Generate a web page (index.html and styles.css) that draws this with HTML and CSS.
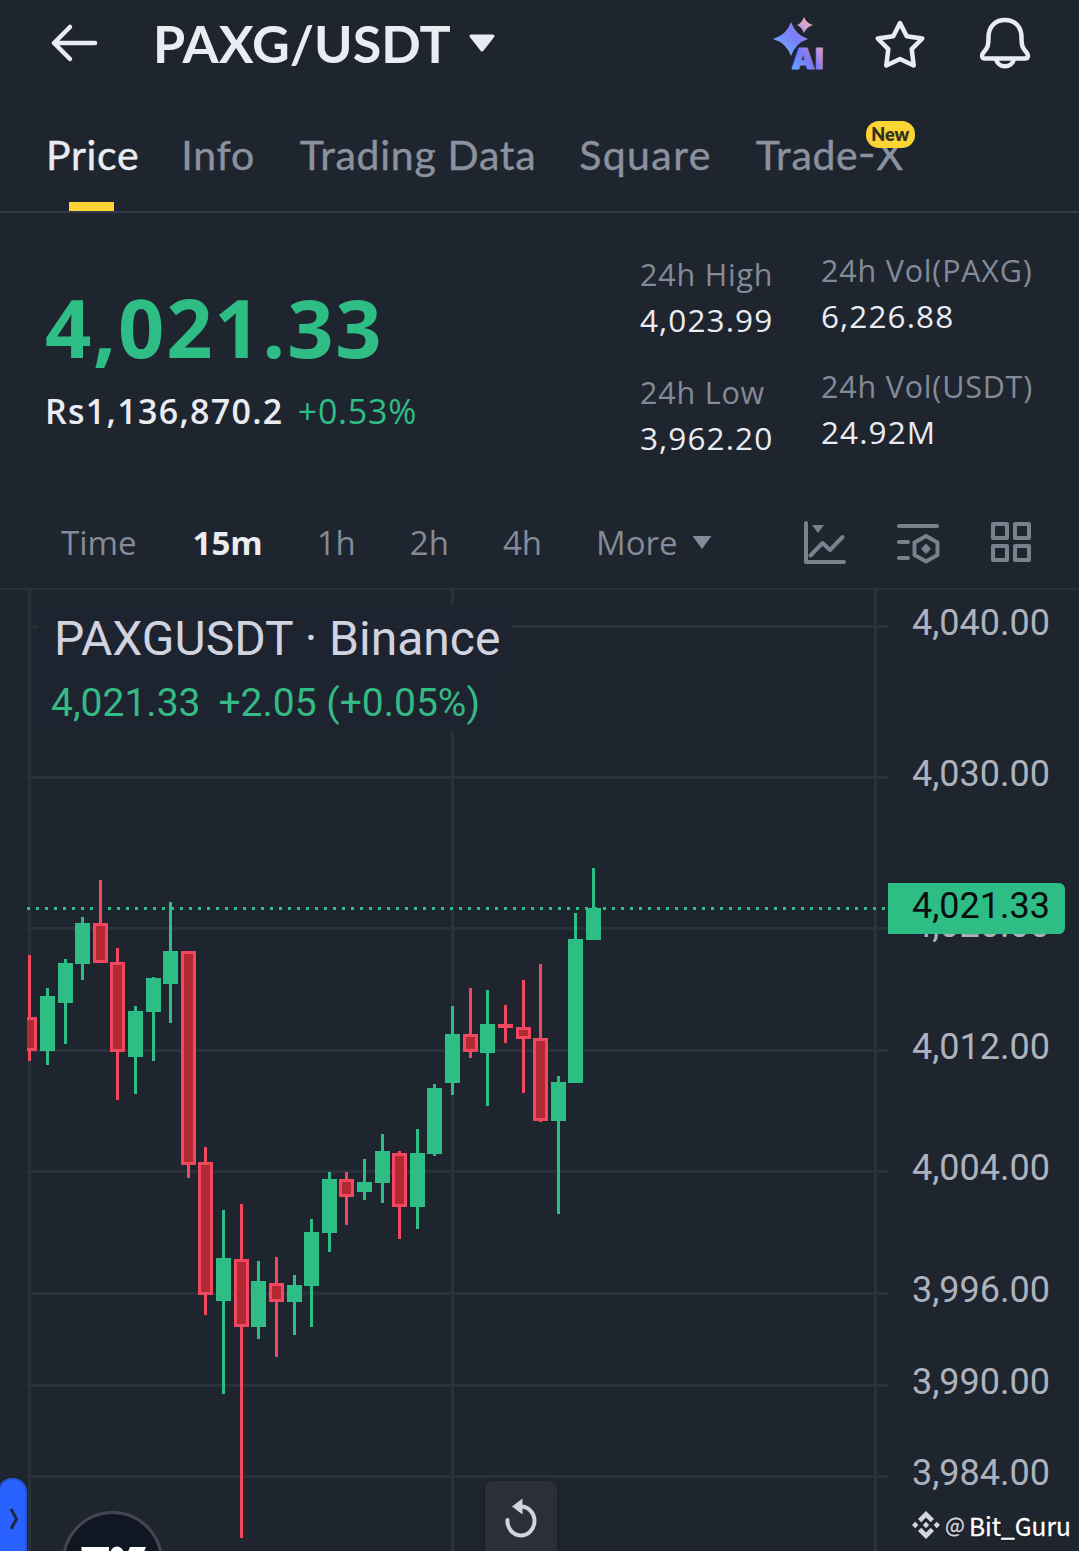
FILE: index.html
```html
<!DOCTYPE html>
<html lang="en">
<head>
    <meta charset="UTF-8" />
    <meta name="viewport" content="width=device-width, initial-scale=1.0" />
    <title>PAXG/USDT</title>
    <link rel="stylesheet" href="styles.css">
</head>
<body>
    <!-- Header -->
    <header class="header">
        <svg class="back" width="48" height="40" viewBox="0 0 48 40">
            <path d="M20 4 L4 20 L20 36 M4 20 H45" />
        </svg>
        <h1 class="pair">PAXG/USDT</h1>
        <svg class="pair-caret" width="28" height="20" viewBox="0 0 28 20">
            <path d="M3 2 H25 L14 16 Z" />
        </svg>
        <div class="header-icons">
            <svg width="56" height="60" viewBox="0 -2 56 60">
                <defs>
                    <linearGradient id="spark" x1="0" y1="1" x2="1" y2="0">
                        <stop offset="0" stop-color="#6fb8ff" />
                        <stop offset="0.6" stop-color="#7c7df8" />
                        <stop offset="1" stop-color="#a88cf5" />
                    </linearGradient>
                    <linearGradient id="spark-small" x1="0" y1="1" x2="1" y2="0">
                        <stop offset="0" stop-color="#a58bff" />
                        <stop offset="1" stop-color="#ffc09a" />
                    </linearGradient>
                    <linearGradient id="ai" x1="0" y1="1" x2="1" y2="0">
                        <stop offset="0" stop-color="#62b0ff" />
                        <stop offset="0.5" stop-color="#7b78f8" />
                        <stop offset="1" stop-color="#f0a5c8" />
                    </linearGradient>
                </defs>
                <path fill="url(#spark)" d="M20 6 Q24.500 19 37 23 Q24.500 27 20 40 Q15.500 27 2 23 Q15.500 19 20 6 Z" />
                <path fill="url(#spark-small)" d="M33 1 Q35.500 7.500 42 9 Q35.500 11 33 17 Q30.500 11 26 9 Q30.500 7.500 33 1 Z" />
                <text class="ai-text" x="20.500" y="53" textLength="32" lengthAdjust="spacingAndGlyphs">AI</text>
            </svg>
            <svg class="line-icon star" width="52" height="52" viewBox="0 0 52 52">
                <path d="M26 5 L32.700 18.300 L48.300 20.500 L37.700 31.200 L39.700 47.500 L26 41 L12.300 47.500 L14.300 31.200 L3.700 20.500 L19.300 18.300 Z" />
            </svg>
            <svg class="line-icon" width="52" height="56" viewBox="0 0 52 56">
                <path d="M26 4 C16 4 9.500 11 9.500 21 C9.500 30 8.500 32 4.500 36.500 C2 39.500 3 42.500 6 42.500 H46 C49 42.500 50 39.500 47.500 36.500 C43.500 32 42.500 30 42.500 21 C42.500 11 36 4 26 4 Z" />
                <path d="M17 43 A9.200 9.200 0 0 0 35 43" />
            </svg>
        </div>
    </header>

    <!-- Tabs -->
    <nav class="tabs">
        <a class="tab active">Price</a>
        <a class="tab">Info</a>
        <a class="tab tab-data">Trading Data</a>
        <a class="tab tab-square">Square</a>
        <a class="tab tab-trade">Trade<span class="dash">-</span>X<span class="badge">New</span></a>
    </nav>

    <!-- Ticker -->
    <section class="ticker">
        <div class="ticker-main">
            <div class="price">4,021.33</div>
            <div class="fiat">Rs1,136,870.2 <span class="change">+0.53%</span></div>
        </div>
        <div class="stats">
            <div class="stat">
                <span class="stat-label">24h High</span>
                <span class="stat-value">4,023.99</span>
            </div>
            <div class="stat">
                <span class="stat-label">24h Low</span>
                <span class="stat-value">3,962.20</span>
            </div>
        </div>
        <div class="stats stats-vol">
            <div class="stat">
                <span class="stat-label">24h Vol(PAXG)</span>
                <span class="stat-value">6,226.88</span>
            </div>
            <div class="stat">
                <span class="stat-label">24h Vol(USDT)</span>
                <span class="stat-value">24.92M</span>
            </div>
        </div>
    </section>

    <!-- Interval toolbar -->
    <div class="toolbar">
        <div class="intervals">
            <span class="interval">Time</span>
            <span class="interval active">15m</span>
            <span class="interval">1h</span>
            <span class="interval">2h</span>
            <span class="interval">4h</span>
            <span class="interval more">More
                <svg width="22" height="16" viewBox="0 0 22 16"><path d="M1.500 1 H20.500 L11 14 Z" /></svg>
            </span>
        </div>
        <div class="tools">
            <svg width="44" height="44" viewBox="0 0 44 44">
                <path d="M4 2 V41 H42 M8.500 34.500 L20.500 22 L28 29 L40.500 16" />
                <path class="solid" d="M10 4 H22 L16 12 Z" />
            </svg>
            <svg width="44" height="44" viewBox="0 0 44 44">
                <path d="M3 5 H41 M3 21 H12 M3 37 H12 M30 15 L41.500 21.500 V34 L30 40.500 L18.500 34 V21.500 Z" />
                <path class="solid" d="M30 22.500 L35 27.700 L30 33 L25 27.700 Z" />
            </svg>
            <svg width="44" height="44" viewBox="0 0 44 44">
                <rect x="4" y="3" width="14" height="14" />
                <rect x="26" y="3" width="14" height="14" />
                <rect x="4" y="25" width="14" height="14" />
                <rect x="26" y="25" width="14" height="14" />
            </svg>
        </div>
    </div>

    <!-- Chart -->
    <main class="chart">
        <svg id="plot" width="1079" height="961" viewBox="0 590 1079 961"></svg>

        <div class="legend">
            <div class="legend-title">PAXGUSDT · Binance</div>
            <div class="legend-values"><span>4,021.33</span><span>+2.05 (+0.05%)</span></div>
        </div>

        <div class="price-tag">4,021.33</div>

        <div class="drawer-handle">
            <svg width="12" height="24" viewBox="0 0 12 24"><path d="M3 2 L8.500 12 L3 22" /></svg>
        </div>

        <div class="tv-logo">
            <svg width="100" height="60" viewBox="0 0 100 60">
                <path d="M18.500 36 H46 V60 H32 V48 H18.500 Z" />
                <circle cx="54" cy="42" r="6.500" />
                <path d="M67 36 H83 L73 60 H57 Z" />
            </svg>
        </div>

        <div class="reset">
            <svg width="40" height="44" viewBox="0 0 40 44">
                <path class="ring" d="M6.500 24 A13.500 14.500 0 1 0 20 10.500" />
                <path class="head" d="M11 10.500 L21.500 2.500 V18.500 Z" />
            </svg>
        </div>

        <div class="watermark">
            <svg width="28" height="28" viewBox="0 0 28 28">
                <path d="M14 0 L22 8 L18.700 11.300 L14 6.600 L9.300 11.300 L6 8 Z" />
                <path d="M14 28 L22 20 L18.700 16.700 L14 21.400 L9.300 16.700 L6 20 Z" />
                <path d="M14 10.800 L17.200 14 L14 17.200 L10.800 14 Z" />
                <path d="M3.200 10.800 L6.400 14 L3.200 17.200 L0 14 Z" />
                <path d="M24.800 10.800 L28 14 L24.800 17.200 L21.600 14 Z" />
            </svg>
            <span class="at">@</span><span class="user">Bit_Guru</span>
        </div>
    </main>

    <script src="chart.js"></script>
</body>
</html>
```

FILE: styles.css
```css
* {
    box-sizing: border-box;
}

body {
    margin: 0;
    width: 1079px;
    height: 1551px;
    overflow: hidden;
    background: #1f252f;
    color: #eaecf2;
    font-family: 'Lato', 'Open Sans', sans-serif;
}

svg {
    display: block;
    flex-shrink: 0;
}

/* Header */
.header {
    display: flex;
    align-items: center;
    height: 88px;
    padding: 0 48px 0 50px;
}

.back {
    fill: none;
    stroke: #eaecf2;
    stroke-width: 4.5;
    stroke-linecap: round;
    stroke-linejoin: round;
    margin-bottom: 2px;
}

.pair {
    margin: 0 0 3px 55px;
    font-size: 52px;
    line-height: 60px;
    font-weight: 700;
}

.pair-caret {
    margin-left: 17px;
    fill: #eaecf2;
    stroke: #eaecf2;
    stroke-width: 3;
    stroke-linejoin: round;
}

.header-icons {
    display: flex;
    align-items: center;
    gap: 47px;
    margin-left: auto;
}

.header-icons svg {
    overflow: visible;
}

.ai-text {
    font-family: 'Inter', sans-serif;
    font-size: 29px;
    font-weight: 900;
    fill: url(#ai);
    stroke: url(#ai);
    stroke-width: 1;
    stroke-linejoin: round;
}

.line-icon {
    fill: none;
    stroke: #eaecf2;
    stroke-width: 4.5;
    stroke-linejoin: round;
}

.star {
    margin: 0 6px 1px 0;
}

/* Tabs */
.tabs {
    display: flex;
    gap: 42px;
    height: 125px;
    padding: 37px 0 0 46px;
    border-bottom: 2px solid #333a45;
}

.tab {
    position: relative;
    display: block;
    font-size: 41px;
    line-height: 60px;
    color: #8b919f;
    letter-spacing: 0.7px;
    -webkit-text-stroke: 0.4px;
}

.tab.active {
    color: #eaecf2;
}

.tab.active::after {
    content: "";
    display: block;
    width: 45px;
    height: 9px;
    margin: 17px 0 0 23px;
    background: #fcd535;
}

.tab-data {
    margin-left: 3px;
}

.tab-square {
    margin-left: 1px;
    letter-spacing: 1.4px;
}

.tab-trade {
    margin-left: 2px;
}

.dash {
    display: inline-block;
    margin: 0 1px;
    transform: translateY(-2px) scaleX(1.2);
}

.badge {
    position: absolute;
    left: 110px;
    top: -4px;
    width: 49px;
    height: 27px;
    border-radius: 13px;
    background: #fcd535;
    color: #33301f;
    font-size: 18px;
    line-height: 27px;
    font-weight: 800;
    letter-spacing: 0;
    text-align: center;
    -webkit-text-stroke: 0;
}

/* Ticker */
.ticker {
    display: flex;
    height: 285px;
    font-family: 'Open Sans', sans-serif;
}

.ticker-main {
    width: 640px;
    padding: 69px 0 0 45px;
}

.price {
    font-size: 81px;
    line-height: 90px;
    font-weight: 700;
    letter-spacing: 1.8px;
    color: #2ebd85;
}

.fiat {
    margin-top: 19px;
    font-size: 34px;
    line-height: 40px;
    font-weight: 600;
    letter-spacing: 1.3px;
    white-space: nowrap;
}

.change {
    margin-left: 4px;
    font-weight: 500;
    letter-spacing: 0.8px;
    color: #2ebd85;
}

.stats {
    display: flex;
    flex-direction: column;
    gap: 25px;
    width: 181px;
    padding-top: 38px;
}

.stats-vol {
    width: 230px;
    padding-top: 33.5px;
    gap: 24px;
}

.stat {
    display: flex;
    flex-direction: column;
    white-space: nowrap;
    line-height: 46.5px;
}

.stat-label {
    font-size: 30.5px;
    letter-spacing: 0.8px;
    color: #848a97;
}

.stat-value {
    font-size: 31.5px;
    letter-spacing: 1.1px;
    margin-top: -0.5px;
}

/* Interval toolbar */
.toolbar {
    display: flex;
    justify-content: space-between;
    align-items: center;
    height: 92px;
    padding: 0 46px 0 61px;
    border-bottom: 2px solid #2a303a;
}

.intervals {
    display: flex;
    gap: 54px;
    margin-bottom: 1px;
    font-family: 'Open Sans', sans-serif;
    font-size: 33px;
    line-height: 46px;
    color: #848a97;
}

.interval.active {
    margin-left: 2px;
    color: #eaecf2;
    font-weight: 700;
}

.more {
    display: flex;
    align-items: center;
    gap: 13px;
}

.more svg {
    fill: #848a97;
}

.tools {
    display: flex;
    gap: 49.5px;
    fill: none;
    stroke: #7a808c;
    stroke-width: 4;
    stroke-linecap: round;
    stroke-linejoin: round;
}

.tools .solid {
    fill: #7a808c;
    stroke: none;
}

/* Chart */
.chart {
    position: relative;
    height: 961px;
    font-family: 'Roboto', sans-serif;
}

.grid {
    stroke: #2b313b;
    stroke-width: 3;
}

.axis-label {
    font-size: 36px;
    fill: #aeb2bd;
}

.price-line {
    stroke: #2ebd85;
    stroke-width: 3;
    stroke-dasharray: 3 6;
}

.up {
    fill: #2ebd85;
}

.down {
    fill: #f0485f;
}

.down-core {
    fill: #b22833;
}

.legend {
    position: absolute;
    left: 38px;
    top: 14px;
}

.legend div {
    width: max-content;
    background: rgba(31, 37, 47, 0.85);
    white-space: nowrap;
}

.legend-title {
    padding: 0 12px 0 16px;
    font-size: 48px;
    line-height: 70px;
    color: #d1d4e0;
}

.legend-values {
    display: flex;
    gap: 18px;
    padding: 0 10px 0 13px;
    font-size: 39px;
    line-height: 58px;
    color: #35b985;
}

.price-tag {
    position: absolute;
    left: 888px;
    top: 293px;
    width: 177px;
    height: 51px;
    padding-left: 24px;
    border-radius: 0 6px 6px 0;
    background: #2ebd85;
    color: #0b0e11;
    font-size: 36px;
    line-height: 47px;
}

.drawer-handle {
    position: absolute;
    left: -2px;
    top: 888px;
    width: 29px;
    height: 90px;
    padding: 27px 0 0 8px;
    border: 2px solid #2455d8;
    border-radius: 14px;
    background: #2962ff;
}

.drawer-handle svg {
    fill: none;
    stroke: #1b2848;
    stroke-width: 3;
}

.tv-logo {
    position: absolute;
    left: 62px;
    top: 921px;
    width: 101px;
    height: 101px;
    border: 3px solid #434751;
    border-radius: 50%;
    background: #111722;
    overflow: hidden;
}

.tv-logo svg {
    margin-left: -2px;
    margin-top: -3px;
    fill: #fff;
}

.reset {
    position: absolute;
    left: 485px;
    top: 891px;
    width: 72px;
    height: 80px;
    padding: 15px 0 0 16px;
    border-radius: 8px;
    background: #2a2f39;
    box-shadow: 0 2px 5px rgba(0, 0, 0, 0.25);
}

.reset .ring {
    fill: none;
    stroke: #d1d4dc;
    stroke-width: 4;
    stroke-linecap: round;
}

.reset .head {
    fill: #d1d4dc;
}

.watermark {
    position: absolute;
    left: 912px;
    top: 915px;
    display: flex;
    align-items: center;
    height: 40px;
    font-family: 'Noto Sans CJK SC', 'Noto Sans', sans-serif;
    font-size: 24.5px;
    color: #fff;
    -webkit-text-stroke: 0.3px;
    text-shadow: 0 1px 2px rgba(0, 0, 0, 0.5);
}

.watermark svg {
    fill: #d3d6df;
}

.at {
    margin: 0 0 3px 5px;
    font-size: 21px;
    color: #d3d6df;
}

.user {
    margin-left: 4px;
}
```

FILE: chart.js
```js
const NS = "http://www.w3.org/2000/svg";
const plot = document.getElementById("plot");

const levels = [
    { y: 626.5, label: "4,040.00" },
    { y: 777.5, label: "4,030.00" },
    { y: 928.5, label: "4,020.00" },
    { y: 1050.5, label: "4,012.00" },
    { y: 1171.5, label: "4,004.00" },
    { y: 1293.5, label: "3,996.00" },
    { y: 1385.5, label: "3,990.00" },
    { y: 1476.5, label: "3,984.00" }
];

// x, high, body top, body bottom, low, direction
const candles = [
    [29, 955, 1017, 1051, 1061, "down"],
    [47, 988, 996, 1051, 1065, "up"],
    [65, 959, 963, 1003, 1044, "up"],
    [82, 917, 923, 964, 980, "up"],
    [100, 880, 923, 963, 963, "down"],
    [117, 948, 962, 1052, 1100, "down"],
    [135, 1006, 1011, 1057, 1094, "up"],
    [153, 977, 978, 1012, 1061, "up"],
    [170, 902, 951, 984, 1023, "up"],
    [188, 951, 951, 1165, 1178, "down"],
    [205, 1147, 1162, 1295, 1315, "down"],
    [223, 1210, 1258, 1301, 1394, "up"],
    [241, 1204, 1259, 1327, 1538, "down"],
    [258, 1261, 1281, 1327, 1339, "up"],
    [276, 1257, 1283, 1302, 1357, "down"],
    [294, 1275, 1285, 1302, 1335, "up"],
    [311, 1219, 1232, 1286, 1327, "up"],
    [329, 1172, 1179, 1233, 1252, "up"],
    [346, 1172, 1179, 1197, 1225, "down"],
    [364, 1159, 1182, 1192, 1200, "up"],
    [382, 1134, 1151, 1183, 1203, "up"],
    [399, 1151, 1153, 1207, 1239, "down"],
    [417, 1129, 1153, 1207, 1229, "up"],
    [434, 1084, 1088, 1154, 1156, "up"],
    [452, 1006, 1034, 1083, 1095, "up"],
    [470, 988, 1034, 1052, 1058, "down"],
    [487, 990, 1024, 1053, 1106, "up"],
    [505, 1005, 1024, 1028, 1043, "down"],
    [523, 980, 1027, 1039, 1093, "down"],
    [540, 964, 1038, 1121, 1122, "down"],
    [558, 1076, 1082, 1121, 1214, "up"],
    [575, 913, 939, 1083, 1083, "up"],
    [593, 868, 908, 940, 940, "up"]
];

function add(name, attrs, text) {
    const el = document.createElementNS(NS, name);
    for (const key in attrs) el.setAttribute(key, attrs[key]);
    if (text) el.textContent = text;
    plot.appendChild(el);
}

function rect(x, y, x2, y2, cls) {
    const left = Math.max(x, 27);
    add("rect", { x: left, y: y, width: x2 - left, height: y2 - y, class: cls });
}

[29.5, 452.5, 875.5].forEach(x => add("line", { x1: x, x2: x, y1: 588, y2: 1551, class: "grid" }));

levels.forEach(level => {
    add("line", { x1: 27, x2: 888, y1: level.y, y2: level.y, class: "grid" });
    add("text", { x: 912, y: level.y + 8.5, class: "axis-label" }, level.label);
});

add("line", { x1: 27, x2: 888, y1: 908.5, y2: 908.5, class: "price-line" });

candles.forEach(([x, high, top, bottom, low, dir]) => {
    rect(x - 1, high, x + 2, low, dir);
    rect(x - 7, top, x + 8, bottom, dir);
    if (dir === "down" && bottom - top > 6) {
        rect(x - 4, top + 3, x + 5, bottom - 3, "down-core");
    }
});
```
